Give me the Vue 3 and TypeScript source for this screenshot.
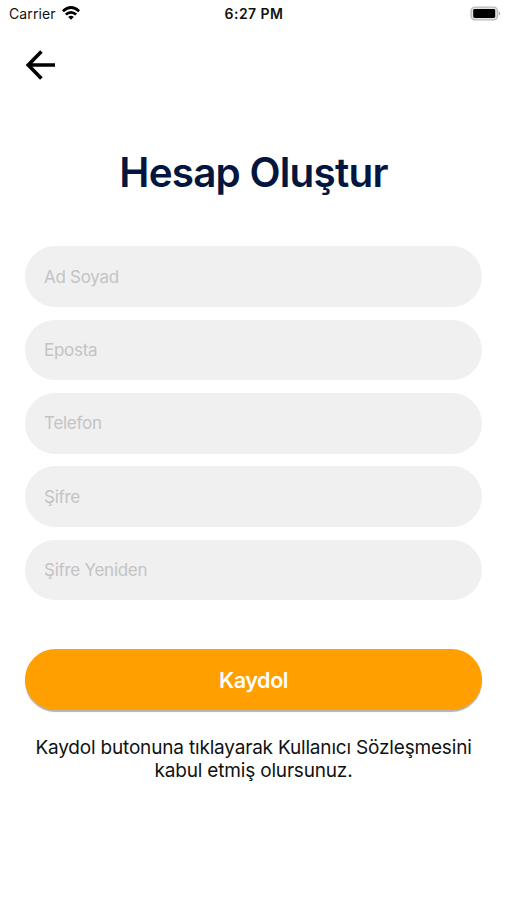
<script setup lang="ts">
import { reactive } from 'vue'

interface Field {
  key: string
  label: string
  type: string
}

const fields: Field[] = [
  { key: 'name', label: 'Ad Soyad', type: 'text' },
  { key: 'email', label: 'Eposta', type: 'email' },
  { key: 'phone', label: 'Telefon', type: 'tel' },
  { key: 'password', label: 'Şifre', type: 'password' },
  { key: 'confirm', label: 'Şifre Yeniden', type: 'password' },
]

const form = reactive<Record<string, string>>({
  name: '',
  email: '',
  phone: '',
  password: '',
  confirm: '',
})
</script>

<template>
  <main class="screen">
    <header class="status">
      <div class="carrier">
        <span>Carrier</span>
        <svg class="wifi" viewBox="0 0 18 14" width="18" height="14">
          <g fill="none" stroke="#000" stroke-width="2.7">
            <path d="M0.9 5.2Q9 -2.2 17.1 5.2" />
            <path d="M3.8 8.6Q9 4 14.2 8.6" />
          </g>
          <path d="M6.2 11Q9 8.6 11.8 11L9 13.7Z" />
        </svg>
      </div>
      <span class="time">6:27 PM</span>
      <svg class="battery" viewBox="0 0 31 15" width="31" height="15">
        <rect x="1.1" y="1.1" width="26.4" height="12.8" rx="4" fill="#e4e4e4" stroke="#b9b9b9" stroke-width="1.4" />
        <rect x="3.2" y="3" width="22" height="9" rx="1.4" fill="#000" />
        <path d="M28.9 5.3Q31.4 7.5 28.9 9.7Z" fill="#a5a5a5" />
      </svg>
    </header>

    <button class="back" type="button" aria-label="Geri">
      <svg viewBox="0 0 30 30" width="30" height="30" fill="none" stroke="#000" stroke-width="3.6">
        <path d="M30 15H3.6M16.4 1.6L3.2 15L16.4 28.4" />
      </svg>
    </button>

    <h1 class="title">Hesap Oluştur</h1>

    <form class="form" @submit.prevent>
      <div class="fields">
        <input
          v-for="field in fields"
          :key="field.key"
          v-model="form[field.key]"
          class="field"
          :type="field.type"
          :placeholder="field.label"
        />
      </div>
      <button class="submit" type="submit">Kaydol</button>
    </form>

    <p class="terms">Kaydol butonuna tıklayarak Kullanıcı Sözleşmesini kabul etmiş olursunuz.</p>
  </main>
</template>

<style>
body {
  background: #fff;
}
</style>

<style scoped>
.screen {
  box-sizing: border-box;
  width: 100%;
  height: 900px;
  display: flex;
  flex-direction: column;
  padding: 0 25px;
  overflow: hidden;
  background: #fff;
  color: #111;
  font-family: Inter, "Liberation Sans", sans-serif;
}

.status {
  display: grid;
  grid-template-columns: 1fr auto 1fr;
  align-items: center;
  height: 27px;
  margin: 0 -19px 0 -16px;
  font-size: 14px;
}

.carrier {
  display: flex;
  align-items: center;
  gap: 6px;
  letter-spacing: 0.1px;
}

.wifi {
  margin-top: -1px;
}

.time {
  margin-left: -2px;
  font-weight: 600;
  letter-spacing: 0.45px;
}

.battery {
  justify-self: end;
  margin-top: -1px;
}

.back {
  align-self: flex-start;
  height: 30px;
  margin-top: 23px;
  padding: 0;
  border: 0;
  background: none;
}

.back svg {
  display: block;
}

.title {
  margin: 68px 0 0;
  color: #031640;
  font-size: 40.4px;
  font-weight: 600;
  line-height: 50px;
  letter-spacing: -0.76px;
  text-align: center;
  white-space: nowrap;
}

.fields {
  display: grid;
  gap: 12.5px;
  margin-top: 48.4px;
}

.field {
  box-sizing: border-box;
  width: 100%;
  height: 60.8px;
  padding: 0 19px;
  border: 0;
  border-radius: 30.4px;
  outline: 0;
  background: #f0f0f0;
  color: #111;
  font-family: inherit;
  font-size: 17px;
  letter-spacing: -0.27px;
}

.field::placeholder {
  color: #c3c3c5;
  opacity: 1;
}

.submit {
  display: block;
  width: 100%;
  height: 61px;
  margin-top: 49px;
  padding: 0;
  border: 0;
  border-radius: 31px;
  background: #ff9f00;
  box-shadow: 0 2px 1px #b5b2b2;
  color: #fff;
  font-family: inherit;
  font-size: 21.6px;
  font-weight: 600;
  letter-spacing: -0.45px;
}

.terms {
  margin: 25.5px 0 0;
  font-size: 19px;
  line-height: 23px;
  letter-spacing: -0.18px;
  text-align: center;
}
</style>
